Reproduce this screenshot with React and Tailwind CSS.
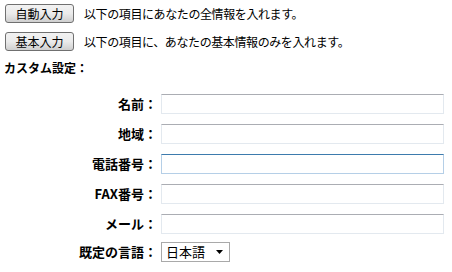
import React from 'react';

const fields = ['名前：', '地域：', '電話番号：', 'FAX番号：', 'メール：'];

function TextBox({ hot }) {
  return (
    <input
      type="text"
      className={`h-[20px] w-[283px] bg-white outline-none border ${hot ? 'border-[#b5cfe7] border-t-[#3d7bad]' : 'border-[#e3e9ef] border-t-[#abadb3]'}`}
    />
  );
}

function FillButton({ children }) {
  return (
    <button className="h-[19px] w-[69px] rounded-[3px] border border-[#707070] bg-gradient-to-b from-[#f2f2f2] via-[#ebebeb] to-[#cfcfcf] text-[12px] leading-none text-black">
      {children}
    </button>
  );
}

export default function App() {
  return (
    <div className="h-[272px] w-[452px] bg-white text-black text-[12px]" style={{ fontFamily: '"Noto Sans CJK JP", "DejaVu Sans", sans-serif' }}>
      <div className="pl-[5px] pt-[4px]">
        <div className="flex items-center gap-[10px] h-[19px]">
          <FillButton>自動入力</FillButton>
          <span className="tracking-[-0.4px]">以下の項目にあなたの全情報を入れます。</span>
        </div>
        <div className="flex items-center gap-[10px] h-[19px] mt-[9px]">
          <FillButton>基本入力</FillButton>
          <span className="tracking-[-0.4px]">以下の項目に、あなたの基本情報のみを入れます。</span>
        </div>
      </div>
      <div className="pl-[4px] mt-[8px] font-bold leading-[18px]">カスタム設定：</div>
      <div className="mt-[17px] flex flex-col gap-[10px]">
        {fields.map((f, i) => (
          <div key={f} className="flex items-center">
            <span className="w-[160px] text-right font-bold text-[13px] pr-[3px]">{f}</span>
            <div className="pl-[1px]"><TextBox hot={i === 2} /></div>
          </div>
        ))}
        <div className="flex items-center -mt-[2px]">
          <span className="w-[160px] text-right font-bold text-[13px] pr-[3px]">既定の言語：</span>
          <div className="pl-[1px]">
            <div className="h-[20px] w-[69px] border border-[#a9a9a9] bg-white flex items-center justify-between pl-[4px] pr-[6px] text-[13px]">
              <span>日本語</span>
              <svg width="7" height="4" viewBox="0 0 7 4"><path d="M0 0h7L3.5 4z" fill="#000" /></svg>
            </div>
          </div>
        </div>
      </div>
    </div>
  );
}
